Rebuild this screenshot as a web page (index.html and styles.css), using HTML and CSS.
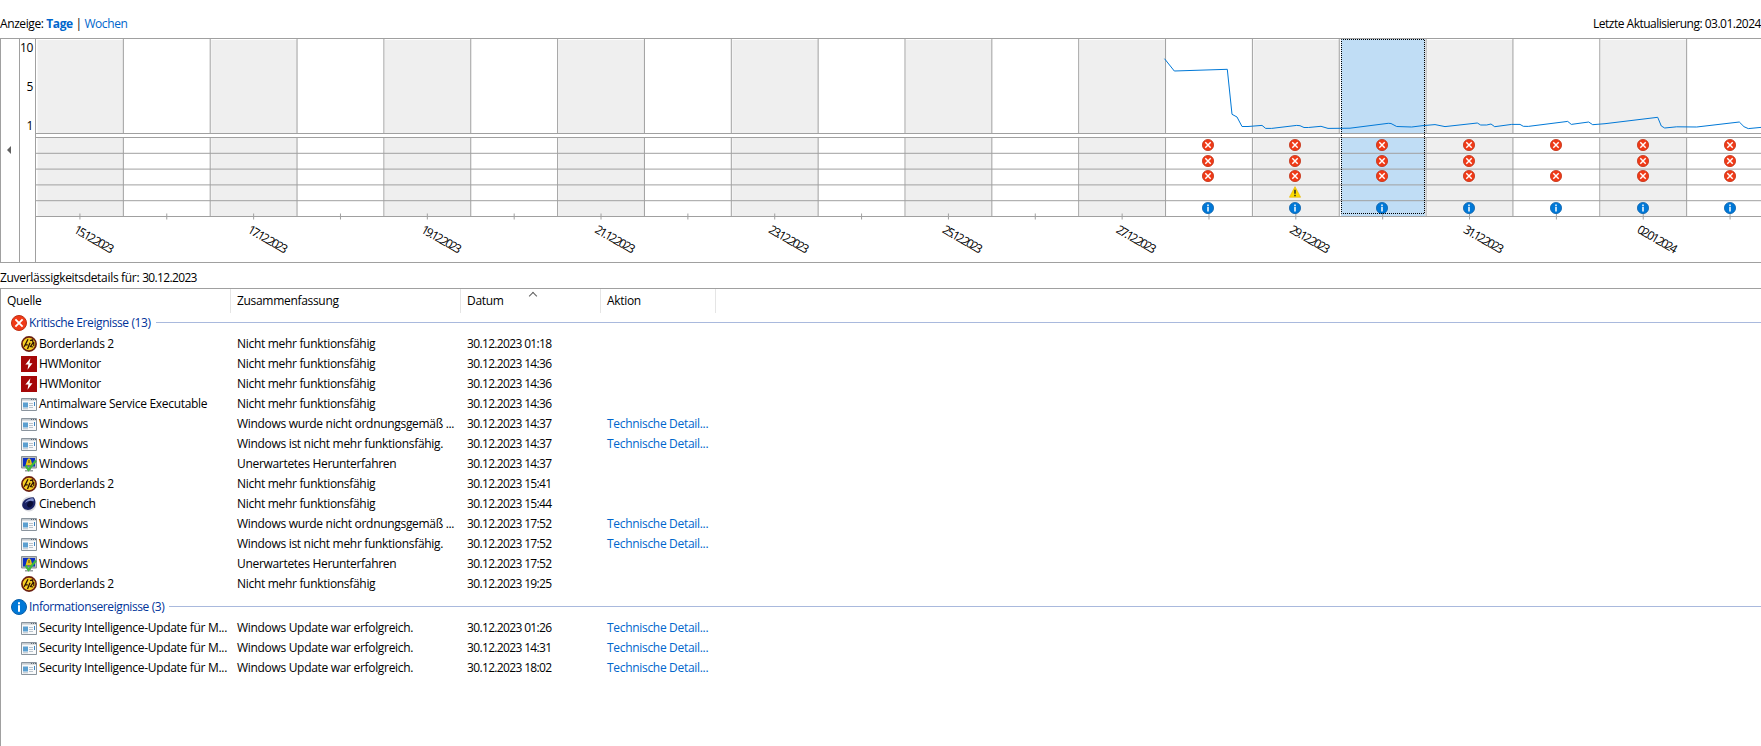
FILE: index.html
```
<!DOCTYPE html>
<html lang="de">

<head>
    <meta charset="UTF-8">
    <meta name="viewport" content="width=device-width, initial-scale=1.0">
    <title>Zuverlässigkeitsverlauf</title>
    <link rel="stylesheet" href="styles.css">
</head>

<body>
    <!-- Icon sprites -->
    <svg class="sprites" width="0" height="0">
        <symbol id="critical" viewBox="0 0 16 16">
            <circle cx="8" cy="8" r="7.5" fill="#f03a17" stroke="#bf2f14" stroke-width="1" />
            <path d="M4.4 4.4l7.2 7.2M11.6 4.4l-7.2 7.2" stroke="#fff" stroke-width="1.9" />
        </symbol>
        <symbol id="info" viewBox="0 0 16 16">
            <circle cx="8" cy="8" r="7.5" fill="#0078d7" stroke="#0b5fa8" stroke-width="1" />
            <path d="M7 3.2h2v2H7zM7 6.2h2v6.6H7z" fill="#fff" />
        </symbol>
        <symbol id="warning" viewBox="0 0 16 16">
            <path d="M8 .8L15.5 15H.5z" fill="#fddb00" stroke="#e8b400" stroke-width=".8" stroke-linejoin="round" />
            <path d="M7 5h2v5.4H7zM7 11.6h2v2H7z" fill="#222" />
        </symbol>
        <symbol id="borderlands" viewBox="0 0 16 16">
            <circle cx="8" cy="8" r="7.1" fill="#f7cf25" stroke="#6b1f10" stroke-width="1.7" />
            <path d="M3.200 10.800L7 3.200M3.800 8.800h3M6.500 13L9 6.800" fill="none" stroke="#2e1106" stroke-width="1.3" />
            <path d="M9 4.600l2.600-.8.4 3-2.600 3.800 2.800.4M12.800 6v4" fill="none" stroke="#2e1106" stroke-width="1.2" />
        </symbol>
        <symbol id="hwmonitor" viewBox="0 0 16 16">
            <path d="M0 0h16v16H0z" fill="#a50808" />
            <path d="M9.4 2.2L4.4 8.6h3l-.9 5.2 5-6.6h-3z" fill="#fff" />
        </symbol>
        <symbol id="program" viewBox="0 0 16 16">
            <path d="M.5 2.5h15v12H.5z" fill="#f8f9fa" stroke="#8a949d" />
            <path d="M1 3h14v1.6H1z" fill="#c3c9ce" />
            <path d="M10 3h1v1h-1zM12 3h1v1h-1zM14 3h1v1h-1z" fill="#5b6670" />
            <path d="M2 6.5h5v5H2z" fill="#5b9fd0" />
            <path d="M2 12.3h5v1H2zM8 7h4v1H8zM8 9h4v1H8zM8 11h4v1H8z" fill="#b8c2cb" />
            <path d="M13 6h1v4h-1z" fill="#3c86c4" />
        </symbol>
        <symbol id="shutdown" viewBox="0 0 16 16">
            <path d="M.5.5h15v11.5H.5z" fill="#b9bdc0" stroke="#8b9094" />
            <path d="M2 2h12v8.5H2z" fill="#0a2fc4" />
            <path d="M6 12h4v2h2v1.5H4V14h2z" fill="#9a9ea1" />
            <path d="M4.500 9.500L6 4q2-3.500 4 0l1.500 5.500z" fill="#e8c21a" />
            <path d="M8 4v3" stroke="#4a3c00" />
            <path d="M4.5 9.5l3 4.3L15 4.5" fill="none" stroke="#3fb83f" stroke-width="2.2" />
        </symbol>
        <symbol id="cinebench" viewBox="0 0 16 16">
            <circle cx="8" cy="8" r="7.4" fill="#d9dadf" />
            <path d="M1.200 9C1.500 4.500 5.500 1.500 12.500 1.200c2.200 2 2.600 6.800.4 9.800-2.500 3.400-7.500 3.800-10 1.500C1.800 11.500 1.200 10.300 1.200 9z" fill="#1a2364" />
            <path d="M4 7C5 4 8.500 2.300 12 2.300c1 1 1 2 .6 3C9.500 3.800 6 5 4 7z" fill="#8292cc" />
            <ellipse cx="9" cy="8.200" rx="2.600" ry="3.300" transform="rotate(35 9 8.200)" fill="#090d35" />
        </symbol>
    </svg>

    <div class="toolbar">
        <div class="view">Anzeige: <a class="active" href="#">Tage</a> | <a href="#">Wochen</a></div>
        <div class="updated">Letzte Aktualisierung: 03.01.2024</div>
    </div>

    <div class="chart">
        <button class="scroll-left" aria-label="Zurück"></button>
        <div class="scale">
            <span>10</span>
            <span>5</span>
            <span>1</span>
        </div>
        <svg class="plot" id="plot" width="1725" height="223"></svg>
    </div>

    <div class="details-title">Zuverlässigkeitsdetails für: <span class="time">30.12.2023</span></div>

    <div class="details">
        <div class="row head">
            <span>Quelle</span>
            <span>Zusammenfassung</span>
            <span class="sorted">Datum</span>
            <span>Aktion</span>
        </div>
        <div id="events"></div>
    </div>

    <script src="script.js"></script>
</body>

</html>
```
FILE: styles.css
```
body {
    margin: 0;
    height: 746px;
    overflow: hidden;
    background: #fff;
    color: #000;
    font-family: 'Open Sans', 'Noto Sans', sans-serif;
    font-size: 12px;
    letter-spacing: -0.31px;
    line-height: 16px;
    display: flex;
    flex-direction: column;
    white-space: nowrap;
}

a {
    color: #0066cc;
    text-decoration: none;
}

.sprites {
    display: none;
}

.toolbar {
    display: flex;
    justify-content: space-between;
    padding-top: 16px;
    height: 22px;
}

.view {
    letter-spacing: -0.4px;
}

.toolbar .active {
    font-weight: bold;
}

.updated {
    width: 168px;
    letter-spacing: -0.5px;
}

.chart {
    display: flex;
    height: 223px;
    border: 1px solid #a0a0a0;
    border-right: none;
}

.scroll-left {
    width: 19px;
    padding: 0 0 2px 6px;
    border: none;
    border-right: 1px solid #a0a0a0;
    background: #fff;
    display: flex;
    align-items: center;
}

.scroll-left::before {
    content: '';
    border: 4px solid transparent;
    border-left: none;
    border-right-color: #606060;
}

.scale {
    width: 16px;
    border-right: 1px solid #a0a0a0;
    display: flex;
    flex-direction: column;
    gap: 23px;
    text-align: right;
    box-sizing: border-box;
    padding: 1px 2px 0 0;
}

.plot {
    flex: none;
}

.grid {
    stroke: #a0a0a0;
}

.index-line {
    fill: none;
    stroke: #0078d7;
}

.selection {
    fill: none;
    stroke: #000;
    stroke-dasharray: 1 1;
    stroke-dashoffset: 0.5;
}

.date {
    letter-spacing: 0;
}

.details-title {
    height: 18px;
    padding-top: 7px;
}

.time {
    letter-spacing: -0.65px;
}

.details {
    flex: 1;
    border: 1px solid #a0a0a0;
    border-right: none;
    border-bottom: none;
}

.row {
    display: grid;
    grid-template-columns: 230px 230px 140px 115px;
    height: 20px;
    line-height: 20px;
}

.row span {
    box-sizing: border-box;
    padding-left: 6px;
    overflow: hidden;
}

.row .source {
    display: flex;
    align-items: center;
    gap: 2px;
    padding-left: 20px;
}

.head {
    height: 24px;
    line-height: 24px;
}

.head span {
    border-right: 1px solid #e5e5e5;
}

.sorted::after {
    content: '';
    display: inline-block;
    width: 5px;
    height: 5px;
    margin-left: 26px;
    border: solid #606060;
    border-width: 1px 0 0 1px;
    transform: translateY(-6px) rotate(45deg);
}

.icon {
    width: 16px;
    height: 16px;
    flex: none;
}

.group {
    display: flex;
    align-items: center;
    gap: 2px;
    height: 20px;
    padding: 0 0 1px 10px;
    color: #003399;
    letter-spacing: -0.4px;
}

.row + .group {
    padding-top: 3px;
}

.group::after {
    content: '';
    flex: 1;
    height: 1px;
    margin: 0 0 1px 3px;
    background: #a9b9dd;
}
```
FILE: script.js
```
const SVG_NS = 'http://www.w3.org/2000/svg';
const plot = document.getElementById('plot');

// Plot area, the origin is the top left corner inside the chart border
const DAY = 86.85;
const DAYS = 20;
const WIDTH = 1725;
const INDEX_BOTTOM = 94.5;
const EVENTS_TOP = 98.5;
const EVENTS_BOTTOM = 177.5;
const LANE = 15.8;

const selectedDay = 15;

const dates = ['15.12.2023', '17.12.2023', '19.12.2023', '21.12.2023', '23.12.2023',
    '25.12.2023', '27.12.2023', '29.12.2023', '31.12.2023', '02.01.2024'];

// Icons of each day: lane -> icon
const markers = {
    13: { 0: 'critical', 1: 'critical', 2: 'critical', 4: 'info' },
    14: { 0: 'critical', 1: 'critical', 2: 'critical', 3: 'warning', 4: 'info' },
    15: { 0: 'critical', 1: 'critical', 2: 'critical', 4: 'info' },
    16: { 0: 'critical', 1: 'critical', 2: 'critical', 4: 'info' },
    17: { 0: 'critical', 2: 'critical', 4: 'info' },
    18: { 0: 'critical', 1: 'critical', 2: 'critical', 4: 'info' },
    19: { 0: 'critical', 1: 'critical', 2: 'critical', 4: 'info' }
};
const laneY = [106, 122, 137, 153, 169];

const indexPoints = [
    [1128.5, 19.7], [1138.3, 32], [1191.3, 30.3], [1196, 75.3], [1201, 78], [1206, 87.5],
    [1212, 87.5], [1226, 86.4], [1229.7, 89.4], [1235.7, 89.4], [1260.7, 86.4], [1264, 86.7],
    [1268, 88.5], [1272.3, 88.5], [1285, 87.3], [1292, 89.4], [1314, 89.2], [1352.3, 84.3],
    [1355, 84.5], [1360.7, 87.5], [1375.7, 88], [1387, 86.6], [1399, 85.6], [1409, 87.6],
    [1441.3, 84], [1444.7, 86], [1450.7, 86], [1455, 85], [1458.7, 87.7], [1475.7, 85.4],
    [1484, 85.4], [1487.3, 87.3], [1492.3, 87.4], [1531.7, 82.4], [1535.3, 85.4],
    [1552.7, 83], [1556.7, 85.7], [1569, 84.7], [1621.7, 78.3], [1625.3, 87], [1628.7, 89],
    [1640.7, 87.8], [1660.7, 88], [1703.3, 83], [1708, 87.7], [1712.3, 89.6], [1725, 88.4]
];

function add(name, attributes, text) {
    const element = document.createElementNS(SVG_NS, name);
    for (const key in attributes) {
        element.setAttribute(key, attributes[key]);
    }
    if (text) {
        element.textContent = text;
    }
    plot.appendChild(element);
}

function line(x1, y1, x2, y2) {
    add('line', { x1, y1, x2, y2, class: 'grid' });
}

// Day backgrounds
for (let day = 0; day < DAYS; day++) {
    const x = day * DAY + 0.5;
    const fill = day % 2 ? '#fff' : '#efefef';
    add('rect', { x: x + 1, y: 1, width: DAY - 1, height: INDEX_BOTTOM - 1, fill });
    add('rect', { x: x + 1, y: EVENTS_TOP, width: DAY - 1, height: EVENTS_BOTTOM - EVENTS_TOP, fill });
    if (day === selectedDay) {
        add('rect', { x: 1305, y: 0, width: 84, height: INDEX_BOTTOM, fill: '#c0ddf5' });
        add('rect', { x: 1305, y: EVENTS_TOP, width: 84, height: EVENTS_BOTTOM - EVENTS_TOP, fill: '#c0ddf5' });
    }
}

// Grid
for (let day = 1; day < DAYS; day++) {
    const x = day * DAY + 0.5;
    line(x, 0, x, INDEX_BOTTOM);
    line(x, EVENTS_TOP, x, EVENTS_BOTTOM);
}
line(0, INDEX_BOTTOM, WIDTH, INDEX_BOTTOM);
for (let lane = 0; lane < 5; lane++) {
    line(0, EVENTS_TOP + lane * LANE, WIDTH, EVENTS_TOP + lane * LANE);
}
line(0, EVENTS_BOTTOM, WIDTH, EVENTS_BOTTOM);
for (let day = 0; day < DAYS; day++) {
    const x = (day + 0.5) * DAY + 0.5;
    line(x, EVENTS_BOTTOM - 3, x, EVENTS_BOTTOM + 3);
}

add('polyline', { points: indexPoints.join(' '), class: 'index-line' });

for (const day in markers) {
    const x = Math.floor((Number(day) + 0.5) * DAY + 0.5);
    for (const lane in markers[day]) {
        add('use', { href: '#' + markers[day][lane], x: x - 6, y: laneY[lane] - 6, width: 12, height: 12 });
    }
}

add('rect', { x: 1305.5, y: 0.5, width: 83, height: 174, class: 'selection' });

dates.forEach((date, i) => {
    const x = (i * 2 + 0.5) * DAY - 6.5;
    add('text', { transform: `translate(${x} 193) rotate(30)`, textLength: 44, class: 'date' }, date);
});

// Event list
const broken = 'Nicht mehr funktionsfähig';
const details = 'Technische Detail...';
const updateSource = 'Security Intelligence-Update für M...';
const updateDone = 'Windows Update war erfolgreich.';
const groups = [
    {
        icon: 'critical',
        title: 'Kritische Ereignisse (13)',
        rows: [
            ['borderlands', 'Borderlands 2', broken, '01:18'],
            ['hwmonitor', 'HWMonitor', broken, '14:36'],
            ['hwmonitor', 'HWMonitor', broken, '14:36'],
            ['program', 'Antimalware Service Executable', broken, '14:36'],
            ['program', 'Windows', 'Windows wurde nicht ordnungsgemäß ...', '14:37', details],
            ['program', 'Windows', 'Windows ist nicht mehr funktionsfähig.', '14:37', details],
            ['shutdown', 'Windows', 'Unerwartetes Herunterfahren', '14:37'],
            ['borderlands', 'Borderlands 2', broken, '15:41'],
            ['cinebench', 'Cinebench', broken, '15:44'],
            ['program', 'Windows', 'Windows wurde nicht ordnungsgemäß ...', '17:52', details],
            ['program', 'Windows', 'Windows ist nicht mehr funktionsfähig.', '17:52', details],
            ['shutdown', 'Windows', 'Unerwartetes Herunterfahren', '17:52'],
            ['borderlands', 'Borderlands 2', broken, '19:25']
        ]
    },
    {
        icon: 'info',
        title: 'Informationsereignisse (3)',
        rows: [
            ['program', updateSource, updateDone, '01:26', details],
            ['program', updateSource, updateDone, '14:31', details],
            ['program', updateSource, updateDone, '18:02', details]
        ]
    }
];

function icon(name) {
    return `<svg class="icon"><use href="#${name}"/></svg>`;
}

document.getElementById('events').innerHTML = groups.map(group => `
    <div class="group">${icon(group.icon)}${group.title}</div>
    ${group.rows.map(([name, source, summary, time, action]) => `<div class="row">
        <span class="source">${icon(name)}${source}</span>
        <span>${summary}</span>
        <span class="time">30.12.2023 ${time}</span>
        <span>${action ? `<a href="#">${action}</a>` : ''}</span>
    </div>`).join('')}
`).join('');
```
